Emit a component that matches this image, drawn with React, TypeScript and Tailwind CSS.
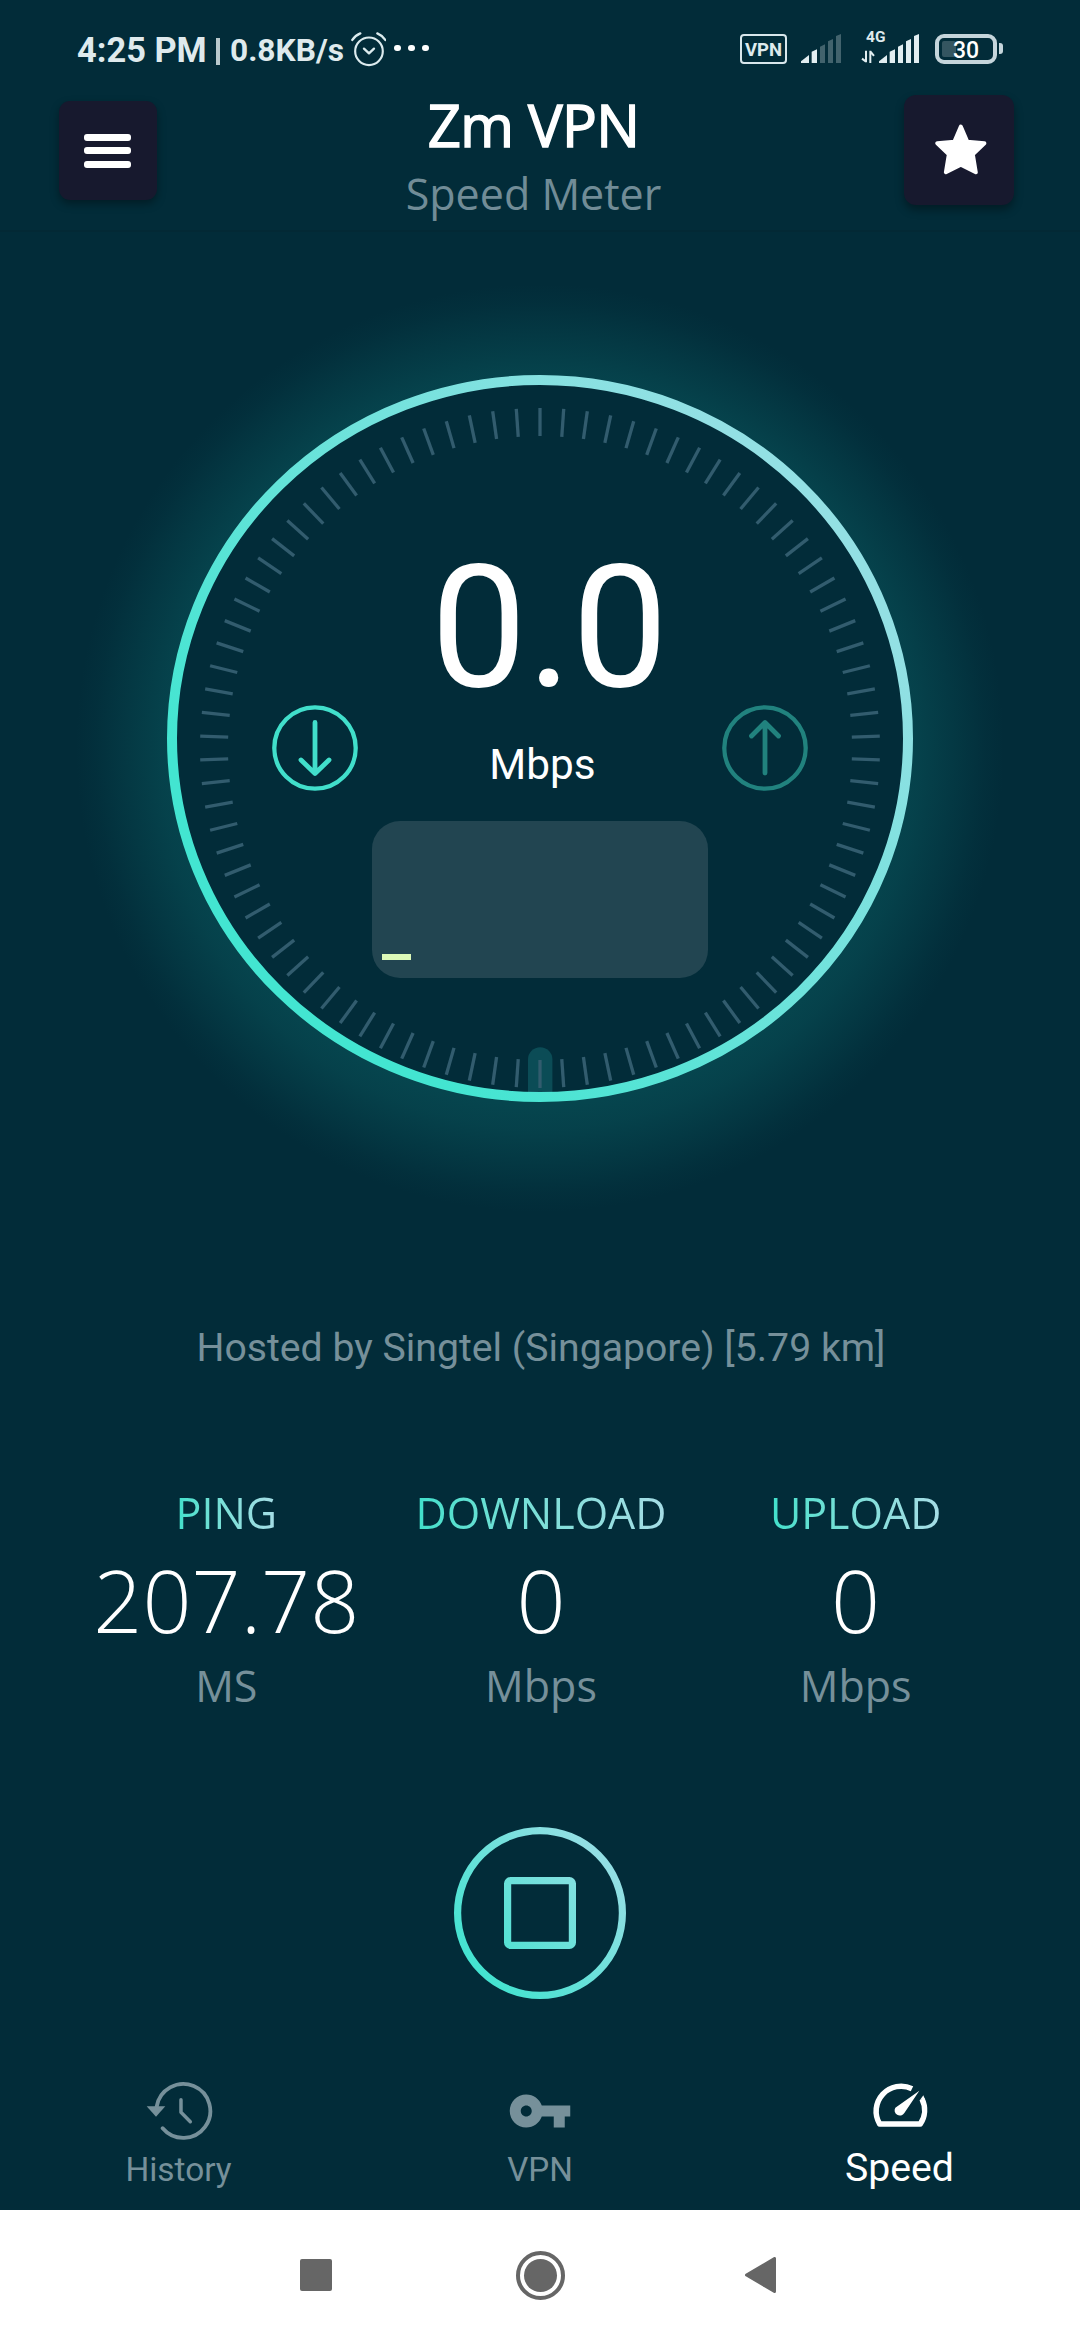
const TICKS = Array.from({ length: 90 }, (_, i) => i * 4);

function SignalBars({ level }: { level: number }) {
  const bars = [
    "M0 87V82L24 63V87Z",
    "M32 87V53L48 46V87Z",
    "M57 87V38L72 31V87Z",
    "M81 87V22L96 15V87Z",
    "M105 87V6L120 0V87Z",
  ];
  return (
    <svg viewBox="0 0 120 87" className="h-[29px] w-[40px]">
      {bars.map((d, i) => (
        <path key={d} d={d} fill={i < level ? "#e2eef1" : "#42636d"} />
      ))}
    </svg>
  );
}

function AlarmIcon() {
  return (
    <svg viewBox="933 96 106 103" className="h-[34.3px] w-[35.3px]" fill="none" stroke="#dcebee" strokeLinecap="round" strokeLinejoin="round">
      <circle cx="987" cy="154" r="41.5" strokeWidth="6.5" />
      <path d="M937 120Q946 106 961 100M1012 100Q1027 106 1036 120" strokeWidth="7" />
      <path d="M972 146L987 160L1002 146" strokeWidth="7" />
    </svg>
  );
}

function StatusBar() {
  return (
    <div className="flex h-[99px] items-center pl-[77px] pr-[77px] font-[Roboto,sans-serif] text-[#dfeaed]">
      <span className="w-[137px] whitespace-nowrap text-[34.4px] leading-[34px] font-bold">4:25 PM</span>
      <span className="mt-[4px] ml-[2px] h-[27px] w-[4px] bg-[#b9c9cd]" />
      <span className="ml-[10px] w-[121px] pt-[3px] text-[31.7px] leading-[34px] font-bold whitespace-nowrap">0.8KB/s</span>
      <AlarmIcon />
      <span className="ml-[8px] flex gap-[7.5px] pb-[3px]">
        <i className="size-[6.5px] rounded-full bg-white" />
        <i className="size-[6.5px] rounded-full bg-white" />
        <i className="size-[6.5px] rounded-full bg-white" />
      </span>
      <div className="mb-[2px] ml-auto flex items-center">
        <span className="flex h-[30px] w-[47px] items-center justify-center rounded-[4px] border-2 border-[#d8e7ec] pt-[3px] text-[18.5px] leading-none font-bold">VPN</span>
        <span className="ml-[14px]"><SignalBars level={2} /></span>
        <span className="-mt-[3px] ml-[20px] flex h-[32px] items-end">
          <span className="flex h-[32px] w-[18px] flex-col justify-between">
            <span className="ml-[5px] w-[22px] text-[15.5px] leading-[12px] font-bold">4G</span>
            <svg viewBox="485 151 42 40" className="h-[13.3px] w-[14px]" fill="none" stroke="#e2eef1" strokeWidth="6">
              <path d="M500 153V188M500 186L488 177M513 190V153M513 155L524 169" />
            </svg>
          </span>
          <SignalBars level={5} />
        </span>
        <span className="ml-[16px] flex h-[30px] w-[62px] items-center rounded-[9px] border-4 border-[#c5d5db] pl-[3px]">
          <span className="h-[16px] w-[14px] rounded-[2px] bg-[#345560]" />
          <span className="-ml-[3px] pt-[4px] text-[23px] leading-none font-medium text-white">30</span>
        </span>
        <span className="ml-[2px] h-[11px] w-[4px] rounded-r-[3px] bg-[#c5d5db]" />
      </div>
    </div>
  );
}

function Header() {
  return (
    <header className="flex h-[133px] border-b-2 border-[#032935] pr-[66px] pl-[59px] font-['Open_Sans',sans-serif]">
      <button className="mt-[2px] flex h-[99px] w-[98px] flex-col items-center justify-center gap-[6.5px] rounded-[11px] bg-[#17192e] pr-[1px] shadow-[0_4px_8px_rgba(0,0,0,0.35)]">
        <i className="h-[7px] w-[47px] rounded-[3px] bg-white" />
        <i className="h-[7px] w-[47px] rounded-[3px] bg-white" />
        <i className="h-[7px] w-[47px] rounded-[3px] bg-white" />
      </button>
      <div className="-mt-[4px] flex flex-1 flex-col items-center gap-[14px] pl-[6px]">
        <h1 className="text-[58px] leading-[60px] font-normal tracking-[-0.6px] text-white [-webkit-text-stroke:1.5px_white]">Zm VPN</h1>
        <p className="text-[43px] leading-[50px] text-[#718c97]">Speed Meter</p>
      </div>
      <button className="-mt-[4px] flex size-[110px] items-center justify-center rounded-[12px] bg-[#17192e] pb-[1px] pl-[3px] shadow-[0_5px_9px_rgba(0,0,0,0.35)]">
        <svg viewBox="703 373 158 154" className="h-[51px] w-[52px]" fill="#fff" stroke="#fff" strokeWidth="12" strokeLinejoin="round">
          <path d="M781.500 380L801 426L853 431L818 465L827 519L781.500 496L736 519L745 465L710 431L762 426Z" />
        </svg>
      </button>
    </header>
  );
}

function DialArt() {
  return (
    <svg viewBox="0 232 1080 1008" className="absolute inset-0 h-full w-full">
      <defs>
        <linearGradient id="ring" x1="0.1" y1="0.8" x2="0.85" y2="0.2">
          <stop offset="0.1" stopColor="#43e5d1" />
          <stop offset="1" stopColor="#93e0e4" />
        </linearGradient>
        <radialGradient id="glow">
          <stop offset="0.77" stopColor="#06454e" stopOpacity="1" />
          <stop offset="0.82" stopColor="#06454e" stopOpacity="0.85" />
          <stop offset="0.91" stopColor="#06454e" stopOpacity="0.4" />
          <stop offset="0.96" stopColor="#06454e" stopOpacity="0.14" />
          <stop offset="1" stopColor="#06454e" stopOpacity="0" />
        </radialGradient>
      </defs>
      <circle cx="540" cy="748" r="464" fill="url(#glow)" />
      <ellipse cx="540" cy="738.500" rx="368" ry="358.500" fill="#022c39" />
      <path d="M528 1096V1059.500A12.200 12.200 0 0 1 552.400 1059.500V1096Z" fill="#0b4c56" />
      <g stroke="#325c6e" strokeWidth="3.300">
        {TICKS.map((deg) => (
          <line key={deg} x1="540" x2="540" y1="408" y2="436" transform={`rotate(${deg} 540 748)`} />
        ))}
      </g>
      <ellipse cx="540" cy="738.500" rx="368" ry="358.500" fill="none" stroke="url(#ring)" strokeWidth="10" />
    </svg>
  );
}

function DirectionIcon({ up }: { up?: boolean }) {
  return (
    <svg viewBox="0 0 86 86" className="size-[86px]" fill="none" stroke={up ? "#21827e" : "#41dfcb"} strokeLinecap="round" strokeLinejoin="round">
      <circle cx="43" cy="43" r="40.700" strokeWidth="4.300" />
      <path d={up ? "M43 68V18M29.500 31L43 17.500L56.500 31" : "M43 17.500V68M29 55L43 68.500L57 55"} strokeWidth="4.800" />
    </svg>
  );
}

function Gauge() {
  return (
    <section className="relative h-[1008px]">
      <DialArt />
      <div className="relative flex flex-col items-center pt-[310px] font-[Roboto,sans-serif] text-white">
        <div className="h-[163px] pl-[19px] text-[171px] leading-[171px]">0.0</div>
        <div className="flex w-[536px] items-end justify-between">
          <DirectionIcon />
          <span className="mb-[1px] pl-[5px] text-[42.3px] leading-[50px]">Mbps</span>
          <DirectionIcon up />
        </div>
        <div className="mt-[30px] flex h-[157px] w-[336px] items-end rounded-[28px] bg-[#224551] pb-[18px] pl-[10px]">
          <i className="h-[6px] w-[29px] bg-[#dcf9b8]" />
        </div>
      </div>
    </section>
  );
}

const STATS = [
  { label: "PING", value: "207.78", unit: "MS" },
  { label: "DOWNLOAD", value: "0", unit: "Mbps" },
  { label: "UPLOAD", value: "0", unit: "Mbps" },
];

function Stats() {
  return (
    <div className="mt-[116px] grid grid-cols-3 pr-[67px] pl-[69px] font-['Open_Sans',sans-serif]">
      {STATS.map((s) => (
        <div key={s.label} className="flex flex-col items-center">
          <span className="bg-linear-to-r from-[#3fe0cb] to-[#a6dde6] bg-clip-text text-[43px] leading-[50px] text-transparent">{s.label}</span>
          <span className="mt-[12px] text-[86px] leading-[100px] font-light text-white">{s.value}</span>
          <span className="mt-[11px] text-[43px] leading-[50px] text-[#76909a]">{s.unit}</span>
        </div>
      ))}
    </div>
  );
}

function StopButton() {
  return (
    <button className="mx-auto mt-[116px] block size-[172px]">
      <svg viewBox="0 0 172 172" className="size-full" fill="none" stroke="url(#stop)" strokeWidth="7.200">
        <defs>
          <linearGradient id="stop" gradientUnits="userSpaceOnUse" x1="20" y1="140" x2="145" y2="30">
            <stop offset="0" stopColor="#43e3d0" />
            <stop offset="1" stopColor="#93dfe4" />
          </linearGradient>
        </defs>
        <circle cx="86" cy="86" r="82.400" />
        <rect x="53.600" y="53.600" width="64.800" height="64.800" rx="3" strokeLinejoin="round" />
      </svg>
    </button>
  );
}

function HistoryIcon() {
  return (
    <svg viewBox="140 92 202 180" className="h-[60px] w-[67.3px]" fill="none" stroke="#76909a" strokeLinecap="round" strokeLinejoin="round">
      <path d="M172 172A81 81 0 1 1 190 237" strokeWidth="11.500" />
      <path d="M142 171H198L170 202Z" fill="#76909a" stroke="none" />
      <path d="M245 151V189L273 217" strokeWidth="10.500" />
    </svg>
  );
}

function KeyIcon() {
  return (
    <svg viewBox="0 0 24 24" className="size-[66px]" fill="#76909a">
      <path d="M12.650 10C11.830 7.670 9.610 6 7 6c-3.310 0-6 2.690-6 6s2.690 6 6 6c2.610 0 4.830-1.670 5.650-4H17v4h4v-4h2v-4H12.650zM7 14c-1.100 0-2-.9-2-2s.9-2 2-2 2 .9 2 2-.9 2-2 2z" />
    </svg>
  );
}

function SpeedIcon() {
  return (
    <svg viewBox="876 97 168 135" className="h-[45px] w-[56px]" fill="none" stroke="#fff">
      <path d="M996 117A75 75 0 0 0 899 223H1021A75 75 0 0 0 1026 148" strokeWidth="16.500" strokeLinejoin="round" />
      <path d="M1030 137L1020 151L1034 147Z" fill="#fff" stroke="none" />
      <path d="M1018 123L946 174A15.500 15.500 0 1 0 973 190Z" fill="#fff" stroke="none" />
    </svg>
  );
}

function BottomNav() {
  return (
    <nav className="mt-[76px] grid h-[135px] grid-cols-3 text-center font-[Roboto,sans-serif] text-[#76909a]">
      <div className="flex flex-col items-center">
        <div className="flex h-[75px] items-start pt-[5px]"><HistoryIcon /></div>
        <span className="pr-[3px] text-[33.4px] leading-[40px]">History</span>
      </div>
      <div className="flex flex-col items-center">
        <div className="flex h-[75px] items-start pt-[3px]"><KeyIcon /></div>
        <span className="text-[33.2px] leading-[40px]">VPN</span>
      </div>
      <div className="flex flex-col items-center text-white">
        <div className="flex h-[73px] items-start pt-[6.5px]"><SpeedIcon /></div>
        <span className="pr-[1px] text-[39.2px] leading-[40px]">Speed</span>
      </div>
    </nav>
  );
}

function SystemNav() {
  return (
    <div className="flex h-[130px] items-center bg-white pl-[300px]">
      <i className="size-[32px] rounded-[2px] bg-[#666]" />
      <span className="ml-[184px] flex size-[49px] items-center justify-center rounded-full border-[4px] border-[#666]">
        <i className="size-[33px] rounded-full bg-[#666]" />
      </span>
      <svg viewBox="0 0 31 36" className="ml-[180px] h-[36px] w-[31px]" fill="#666" stroke="#666" strokeWidth="3" strokeLinejoin="round">
        <path d="M1.500 18L29.500 1.500V34.500Z" />
      </svg>
    </div>
  );
}

export default function App() {
  return (
    <div className="h-[2340px] w-[1080px] overflow-hidden bg-[#022c39]">
      <StatusBar />
      <Header />
      <Gauge />
      <p className="mt-[84px] pl-[2px] text-center font-[Roboto,sans-serif] text-[39.2px] leading-[48px] text-[#76909a]">Hosted by Singtel (Singapore) [5.79 km]</p>
      <Stats />
      <StopButton />
      <BottomNav />
      <SystemNav />
    </div>
  );
}
